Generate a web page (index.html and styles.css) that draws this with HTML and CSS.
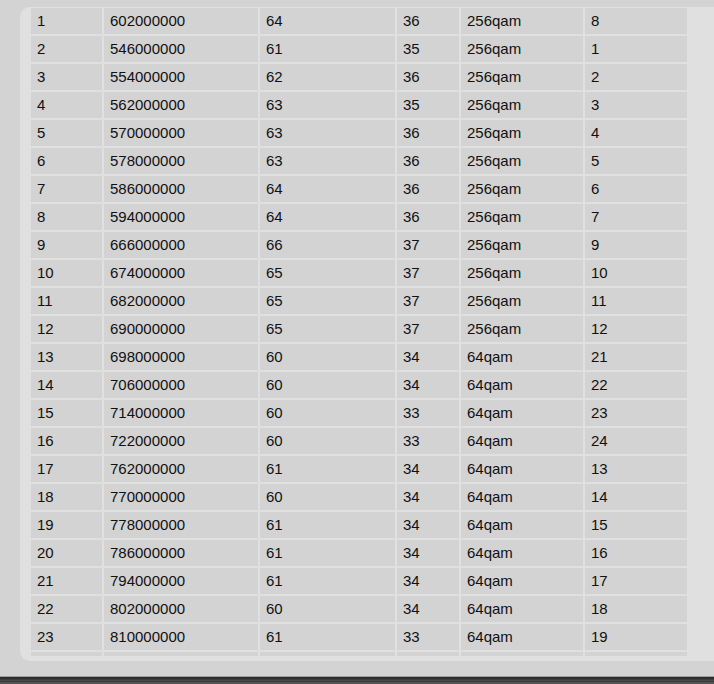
FILE: index.html
```html
<!DOCTYPE html>
<html>
<head>
<meta charset="utf-8">
<link rel="stylesheet" href="styles.css">
</head>
<body>
<div class="page">
  <div class="panel">
    <div class="clip">
      <table class="channels">
        <colgroup>
          <col class="c1"><col class="c2"><col class="c3"><col class="c4"><col class="c5"><col class="c6">
        </colgroup>
        <tbody>
          <tr><td>1</td><td>602000000</td><td>64</td><td>36</td><td>256qam</td><td>8</td></tr>
          <tr><td>2</td><td>546000000</td><td>61</td><td>35</td><td>256qam</td><td>1</td></tr>
          <tr><td>3</td><td>554000000</td><td>62</td><td>36</td><td>256qam</td><td>2</td></tr>
          <tr><td>4</td><td>562000000</td><td>63</td><td>35</td><td>256qam</td><td>3</td></tr>
          <tr><td>5</td><td>570000000</td><td>63</td><td>36</td><td>256qam</td><td>4</td></tr>
          <tr><td>6</td><td>578000000</td><td>63</td><td>36</td><td>256qam</td><td>5</td></tr>
          <tr><td>7</td><td>586000000</td><td>64</td><td>36</td><td>256qam</td><td>6</td></tr>
          <tr><td>8</td><td>594000000</td><td>64</td><td>36</td><td>256qam</td><td>7</td></tr>
          <tr><td>9</td><td>666000000</td><td>66</td><td>37</td><td>256qam</td><td>9</td></tr>
          <tr><td>10</td><td>674000000</td><td>65</td><td>37</td><td>256qam</td><td>10</td></tr>
          <tr><td>11</td><td>682000000</td><td>65</td><td>37</td><td>256qam</td><td>11</td></tr>
          <tr><td>12</td><td>690000000</td><td>65</td><td>37</td><td>256qam</td><td>12</td></tr>
          <tr><td>13</td><td>698000000</td><td>60</td><td>34</td><td>64qam</td><td>21</td></tr>
          <tr><td>14</td><td>706000000</td><td>60</td><td>34</td><td>64qam</td><td>22</td></tr>
          <tr><td>15</td><td>714000000</td><td>60</td><td>33</td><td>64qam</td><td>23</td></tr>
          <tr><td>16</td><td>722000000</td><td>60</td><td>33</td><td>64qam</td><td>24</td></tr>
          <tr><td>17</td><td>762000000</td><td>61</td><td>34</td><td>64qam</td><td>13</td></tr>
          <tr><td>18</td><td>770000000</td><td>60</td><td>34</td><td>64qam</td><td>14</td></tr>
          <tr><td>19</td><td>778000000</td><td>61</td><td>34</td><td>64qam</td><td>15</td></tr>
          <tr><td>20</td><td>786000000</td><td>61</td><td>34</td><td>64qam</td><td>16</td></tr>
          <tr><td>21</td><td>794000000</td><td>61</td><td>34</td><td>64qam</td><td>17</td></tr>
          <tr><td>22</td><td>802000000</td><td>60</td><td>34</td><td>64qam</td><td>18</td></tr>
          <tr><td>23</td><td>810000000</td><td>61</td><td>33</td><td>64qam</td><td>19</td></tr>
          <tr class="partial"><td></td><td></td><td></td><td></td><td></td><td></td></tr>
        </tbody>
      </table>
    </div>
  </div>
  <div class="bottom-bar"></div>
</div>
</body>
</html>
```
FILE: styles.css
```css
html, body {
  margin: 0;
  padding: 0;
  background: #d3d3d3;
  overflow: hidden;
}

.page {
  width: 714px;
  height: 684px;
  display: flex;
  flex-direction: column;
  overflow: hidden;
}

.panel {
  margin-top: 7px;
  margin-left: 20px;
  width: 720px;
  height: 654px;
  flex: none;
  box-sizing: border-box;
  padding: 0 0 5px 9px;
  background: #e0e0e0;
  border-radius: 10px;
}

.clip {
  height: 649px;
  overflow: hidden;
}

.channels {
  margin-top: -1px;
  border-collapse: separate;
  border-spacing: 2px;
  table-layout: fixed;
  width: 660px;
  font-family: "Liberation Sans", Arial, sans-serif;
  font-size: 15px;
  color: #111;
}

.c1 { width: 71px; }
.c2 { width: 154px; }
.c3 { width: 135px; }
.c4 { width: 62px; }
.c5 { width: 122px; }
.c6 { width: 102px; }

.channels td {
  background: #d3d3d3;
  height: 26px;
  line-height: 26px;
  padding: 0 0 0 6px;
  box-sizing: border-box;
  white-space: nowrap;
  overflow: hidden;
}

.bottom-bar {
  margin-top: auto;
  height: 8px;
  flex: none;
  background: linear-gradient(to bottom,
    #9a9a9a 0, #9a9a9a 1px,
    #2e2e2e 1px, #2e2e2e 3px,
    #3c3c3c 3px, #3c3c3c 4px,
    #4a4a4a 4px, #4a4a4a 5px,
    #3a3a3a 5px, #3a3a3a 6px,
    #555 6px, #555 8px);
}
```
